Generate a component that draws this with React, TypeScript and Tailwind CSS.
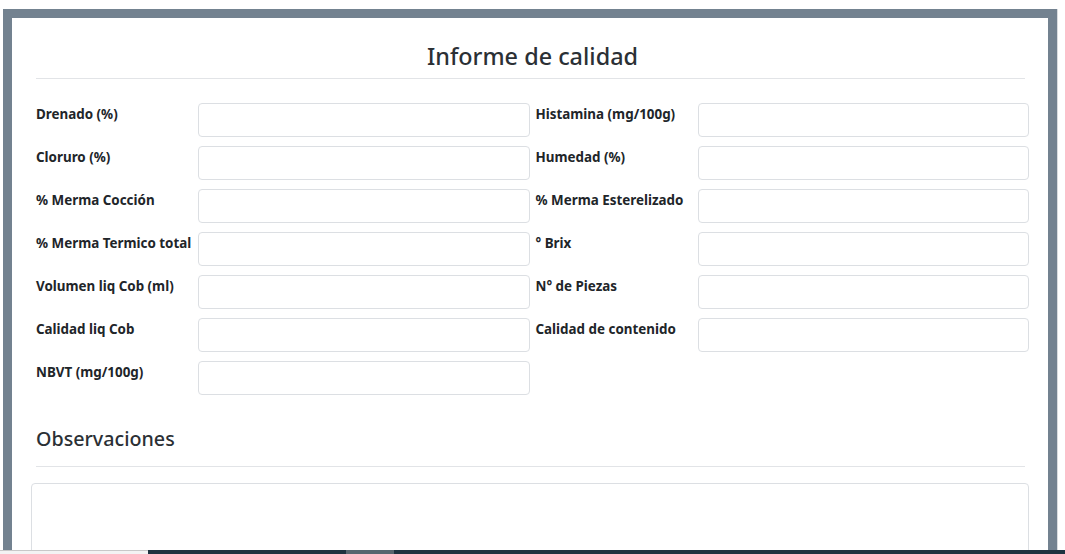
const left = [
  "Drenado (%)",
  "Cloruro (%)",
  "% Merma Cocción",
  "% Merma Termico total",
  "Volumen liq Cob (ml)",
  "Calidad liq Cob",
  "NBVT (mg/100g)",
];

const right = [
  "Histamina (mg/100g)",
  "Humedad (%)",
  "% Merma Esterelizado",
  "° Brix",
  "N° de Piezas",
  "Calidad de contenido",
];

function Field({ label }: { label: string }) {
  return (
    <div className="flex items-start">
      <label className="w-[162px] shrink-0 pt-[2px] text-[13.4px] font-bold leading-[18px] text-[#212529]">
        {label}
      </label>
      <input
        type="text"
        className="h-[34px] flex-1 rounded-[4px] border border-[#dcdfe3] bg-white px-3 text-sm outline-none"
      />
    </div>
  );
}

export default function App() {
  return (
    <div
      className="flex h-[554px] flex-col overflow-hidden bg-white"
      style={{ fontFamily: '"Noto Sans", "Open Sans", sans-serif' }}
    >
      <div className="flex min-h-0 flex-1 pl-[3px] pt-[9px]">
        <div className="flex-1 border-[9px] border-b-0 border-[#738290] bg-white">
          <div className="pl-[24px] pr-[19px] pt-[23px]">
            <h1 className="text-center text-[23.4px] font-medium leading-[30px] text-[#2b3035]">
              Informe de calidad
            </h1>
            <hr className="mr-[4px] mt-[7px] border-t border-[#e2e4e7]" />

            <div className="mt-[24px] grid grid-cols-2 gap-x-[6px]">
              <div className="flex flex-col gap-[9px]">
                {left.map((l) => (
                  <Field key={l} label={l} />
                ))}
              </div>
              <div className="flex flex-col gap-[9px]">
                {right.map((l) => (
                  <Field key={l} label={l} />
                ))}
              </div>
            </div>

            <h2 className="mt-[32px] text-[19.7px] font-medium leading-[24px] text-[#2b3035]">
              Observaciones
            </h2>
            <hr className="mr-[4px] mt-[15px] border-t border-[#e2e4e7]" />
            <textarea className="-ml-[5px] mt-[16px] block h-[80px] w-[calc(100%+5px)] resize-none rounded-[4px] border border-[#dcdfe3] outline-none" />
          </div>
        </div>
        <div className="w-[8px] border-l border-[#d9dcdf] bg-white" />
      </div>
      <div className="flex h-[4px]">
        <div className="w-[148px] border-t border-[#c8c8c8] bg-[#f3f3f3]" />
        <div className="w-[198px] bg-[#1d3340]" />
        <div className="w-[48px] bg-[#56666f]" />
        <div className="flex-1 bg-[#1d3340]" />
      </div>
    </div>
  );
}
